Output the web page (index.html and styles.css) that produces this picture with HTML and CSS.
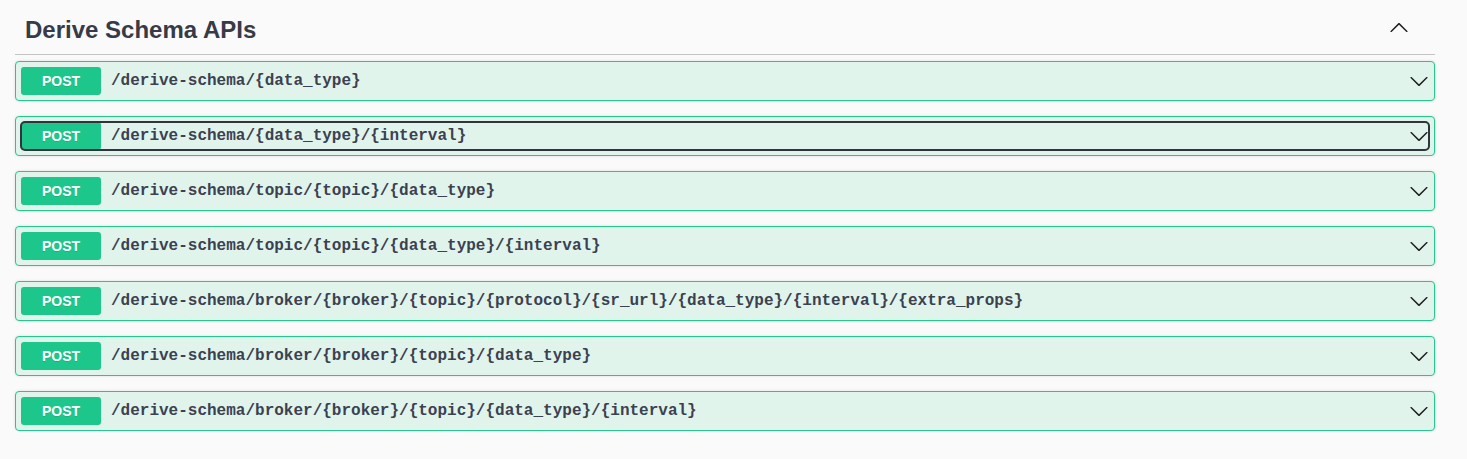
FILE: index.html
```html
<!DOCTYPE html>
<html lang="en">
<head>
<meta charset="utf-8">
<title>Derive Schema APIs</title>
<link rel="stylesheet" href="styles.css">
</head>
<body>
<section class="tag-section">
  <h3 class="tag-title">
    <span class="tag-name">Derive Schema APIs</span>
    <button class="tag-toggle" aria-label="Collapse">
      <svg class="arrow-up" viewBox="0 0 20 20" width="20" height="20"><path d="M17.418 14.908c.272.268.709.268.979 0s.271-.701 0-.969l-7.908-7.83c-.27-.268-.707-.268-.979 0l-7.908 7.83c-.27.268-.27.701 0 .969.271.268.709.268.979 0L10 7.767l7.418 7.141z"/></svg>
    </button>
  </h3>
  <div class="opblocks">
    <div class="opblock">
      <button class="summary">
        <span class="method">POST</span>
        <span class="path">/derive-schema/{data_type}</span>
        <svg class="arrow" viewBox="0 0 20 20" width="20" height="20"><path d="M17.418 6.109c.272-.268.709-.268.979 0s.271.701 0 .969l-7.908 7.83c-.27.268-.707.268-.979 0l-7.908-7.83c-.27-.268-.27-.701 0-.969.271-.268.709-.268.979 0L10 13.25l7.418-7.141z"/></svg>
      </button>
    </div>
    <div class="opblock">
      <button class="summary focused">
        <span class="method">POST</span>
        <span class="path">/derive-schema/{data_type}/{interval}</span>
        <svg class="arrow" viewBox="0 0 20 20" width="20" height="20"><path d="M17.418 6.109c.272-.268.709-.268.979 0s.271.701 0 .969l-7.908 7.83c-.27.268-.707.268-.979 0l-7.908-7.830c-.27-.268-.27-.701 0-.969.271-.268.709-.268.979 0L10 13.25l7.418-7.141z"/></svg>
      </button>
    </div>
    <div class="opblock">
      <button class="summary">
        <span class="method">POST</span>
        <span class="path">/derive-schema/topic/{topic}/{data_type}</span>
        <svg class="arrow" viewBox="0 0 20 20" width="20" height="20"><path d="M17.418 6.109c.272-.268.709-.268.979 0s.271.701 0 .969l-7.908 7.83c-.27.268-.707.268-.979 0l-7.908-7.83c-.27-.268-.27-.701 0-.969.271-.268.709-.268.979 0L10 13.25l7.418-7.141z"/></svg>
      </button>
    </div>
    <div class="opblock">
      <button class="summary">
        <span class="method">POST</span>
        <span class="path">/derive-schema/topic/{topic}/{data_type}/{interval}</span>
        <svg class="arrow" viewBox="0 0 20 20" width="20" height="20"><path d="M17.418 6.109c.272-.268.709-.268.979 0s.271.701 0 .969l-7.908 7.83c-.27.268-.707.268-.979 0l-7.908-7.83c-.27-.268-.27-.701 0-.969.271-.268.709-.268.979 0L10 13.25l7.418-7.141z"/></svg>
      </button>
    </div>
    <div class="opblock">
      <button class="summary">
        <span class="method">POST</span>
        <span class="path">/derive-schema/broker/{broker}/{topic}/{protocol}/{sr_url}/{data_type}/{interval}/{extra_props}</span>
        <svg class="arrow" viewBox="0 0 20 20" width="20" height="20"><path d="M17.418 6.109c.272-.268.709-.268.979 0s.271.701 0 .969l-7.908 7.83c-.27.268-.707.268-.979 0l-7.908-7.83c-.27-.268-.27-.701 0-.969.271-.268.709-.268.979 0L10 13.25l7.418-7.141z"/></svg>
      </button>
    </div>
    <div class="opblock">
      <button class="summary">
        <span class="method">POST</span>
        <span class="path">/derive-schema/broker/{broker}/{topic}/{data_type}</span>
        <svg class="arrow" viewBox="0 0 20 20" width="20" height="20"><path d="M17.418 6.109c.272-.268.709-.268.979 0s.271.701 0 .969l-7.908 7.83c-.27.268-.707.268-.979 0l-7.908-7.83c-.27-.268-.27-.701 0-.969.271-.268.709-.268.979 0L10 13.25l7.418-7.141z"/></svg>
      </button>
    </div>
    <div class="opblock">
      <button class="summary">
        <span class="method">POST</span>
        <span class="path">/derive-schema/broker/{broker}/{topic}/{data_type}/{interval}</span>
        <svg class="arrow" viewBox="0 0 20 20" width="20" height="20"><path d="M17.418 6.109c.272-.268.709-.268.979 0s.271.701 0 .969l-7.908 7.83c-.27.268-.707.268-.979 0l-7.908-7.83c-.27-.268-.27-.701 0-.969.271-.268.709-.268.979 0L10 13.25l7.418-7.141z"/></svg>
      </button>
    </div>
  </div>
</section>
</body>
</html>
```

FILE: styles.css
```css
html, body {
  margin: 0;
  padding: 0;
  background: #fafafa;
}

body {
  font-family: "Liberation Sans", Arial, sans-serif;
  color: #3b4151;
}

.tag-section {
  padding: 6px 32px 0 15px;
}

.tag-title {
  display: flex;
  align-items: flex-start;
  margin: 0 0 6px 0;
  padding: 10px 26px 10px 10px;
  border-bottom: 1px solid #c4c4c4;
  font-size: 24px;
  line-height: 28px;
  font-weight: 700;
  color: #363b47;
}

.tag-name {
  flex: 1;
}

.tag-toggle {
  border: 0;
  background: none;
  padding: 0;
  margin: 1px 0 0 0;
  width: 20px;
  height: 20px;
  display: flex;
  cursor: pointer;
}

.arrow-up,
.arrow {
  fill: #1f1f1f;
  flex: none;
  display: block;
}

.opblocks {
  display: flex;
  flex-direction: column;
  gap: 15px;
}

.opblock {
  border: 1px solid #22c98c;
  border-radius: 4px;
  background: #e1f4ec;
  box-shadow: 0 0 3px rgba(0, 0, 0, 0.12);
  padding: 5px;
}

.summary {
  display: flex;
  align-items: center;
  width: 100%;
  height: 28px;
  padding: 0;
  margin: 0;
  border: 0;
  background: transparent;
  border-radius: 4px;
  text-align: left;
  cursor: pointer;
}

.summary.focused {
  outline: 2px solid #30343c;
  outline-offset: -1px;
}

.method {
  flex: none;
  width: 80px;
  height: 28px;
  line-height: 28px;
  border-radius: 3px;
  background: #1dc68a;
  color: #fff;
  font-family: "Liberation Sans", Arial, sans-serif;
  font-size: 14px;
  font-weight: 700;
  text-align: center;
  text-shadow: 0 1px 0 rgba(0, 0, 0, 0.1);
}

.path {
  flex: 1;
  padding: 0 10px;
  font-family: "Liberation Mono", "Courier New", monospace;
  font-size: 16px;
  font-weight: 700;
  color: #3b4151;
  white-space: nowrap;
}
```
